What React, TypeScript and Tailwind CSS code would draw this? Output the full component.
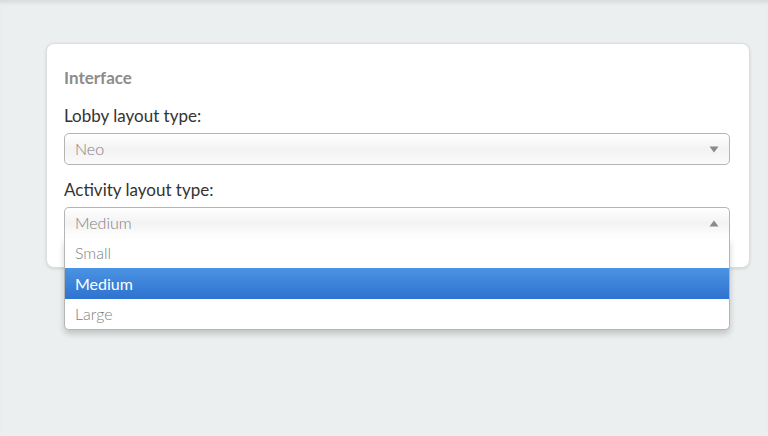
import React from "react";

const font = { fontFamily: "Lato, 'Open Sans', sans-serif" };

function Caret({ up }: { up?: boolean }) {
  return (
    <svg width="10" height="7" viewBox="0 0 10 7" className="text-[#8a8a8a]">
      {up ? (
        <path d="M5 0.5 L9.5 6.5 L0.5 6.5 Z" fill="currentColor" />
      ) : (
        <path d="M0.5 0.5 L9.5 0.5 L5 6.5 Z" fill="currentColor" />
      )}
    </svg>
  );
}

export default function App() {
  const options = ["Small", "Medium", "Large"];
  return (
    <div
      style={font}
      className="h-[436px] w-[768px] overflow-hidden bg-[#ebeff0] pt-[43px] pl-[46px] pr-[18px] shadow-[inset_0_5px_5px_-3px_rgba(0,0,0,0.1)]"
    >
      <div className="rounded-[8px] border border-[#dcdfe0] bg-white pt-[24px] pr-[19px] pb-[29px] pl-[17px] shadow-[0_1px_3px_rgba(0,0,0,0.12)]">
        <div className="text-[17px] leading-[20px] font-bold text-[#8c8c8c]">Interface</div>

        <div className="mt-[16px] text-[17px] leading-[24px] text-[#333]">Lobby layout type:</div>
        <div className="mt-[5px] flex h-[32px] items-center justify-between rounded-[5px] border border-[#b5b5b5] bg-gradient-to-b from-white via-[#f3f3f3] to-[#fafafa] pr-[10px] pl-[10px]">
          <span className="text-[16px] font-light text-[#808080]">Neo</span>
          <Caret />
        </div>

        <div className="mt-[13px] text-[17px] leading-[24px] text-[#333]">Activity layout type:</div>
        <div className="relative mt-[5px]">
          <div className="flex h-[31px] items-center justify-between rounded-t-[5px] border border-b-0 border-[#b5b5b5] bg-gradient-to-b from-white via-[#f3f3f3] to-white pr-[10px] pl-[10px]">
            <span className="text-[16px] font-light text-[#808080]">Medium</span>
            <Caret up />
          </div>
          <div className="absolute top-[31px] right-0 left-0 z-10 overflow-hidden rounded-b-[5px] border border-t-0 border-[#b5b5b5] bg-white shadow-[0_4px_6px_rgba(0,0,0,0.18)]">
            {options.map((o) => (
              <div
                key={o}
                className={
                  o === "Medium"
                    ? "flex h-[31px] items-center bg-gradient-to-b from-[#4b93e3] to-[#2e73cf] pl-[10px] text-[16px] text-white"
                    : "flex h-[30px] items-center pl-[10px] text-[16px] font-light text-[#808080]"
                }
              >
                {o}
              </div>
            ))}
          </div>
        </div>
      </div>
    </div>
  );
}
